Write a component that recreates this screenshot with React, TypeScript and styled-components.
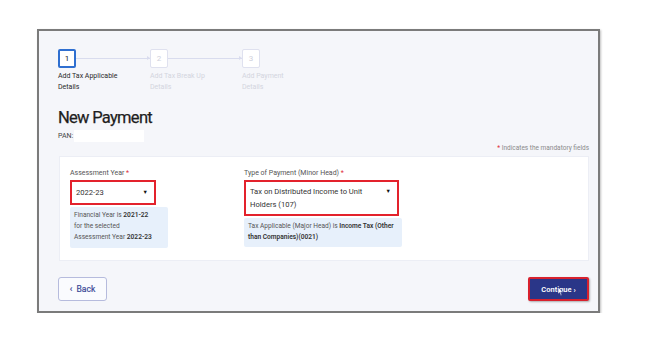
import React from "react";
import styled, { createGlobalStyle } from "styled-components";

const GlobalStyle = createGlobalStyle`
  html, body {
    margin: 0;
    padding: 0;
    background: #ffffff;
  }
  body {
    font-family: Roboto, "Liberation Sans", Arial, sans-serif;
  }
`;

const Page = styled.div`
  padding: 29px 0 0 37px;
`;

const Frame = styled.div`
  box-sizing: border-box;
  width: 563px;
  height: 284px;
  border: 2px solid #7b7b7b;
  background: #f5f6fa;
  padding: 18px 9px 0 19px;
  display: flex;
  flex-direction: column;
  box-shadow: 1px 1px 2px rgba(0, 0, 0, 0.25);
`;

const Stepper = styled.div`
  display: flex;
`;

const Step = styled.div`
  width: 92px;
  display: flex;
  flex-direction: column;
`;

const StepHead = styled.div`
  display: flex;
  align-items: center;
`;

const StepBox = styled.div<{ $active?: boolean }>`
  box-sizing: border-box;
  width: 18px;
  height: 19px;
  flex: none;
  border: ${(p) => (p.$active ? "2px solid #2f6fd0" : "1.5px solid #dfe1ef")};
  border-radius: 2px;
  background: #ffffff;
  display: flex;
  align-items: center;
  justify-content: center;
  font-size: 8px;
  color: ${(p) => (p.$active ? "#222" : "#cfd1dc")};
`;

const Connector = styled.div`
  flex: 1;
  height: 1px;
  background: #d9dcee;
  position: relative;
  &::after {
    content: "";
    position: absolute;
    right: 0;
    top: -2px;
    border-left: 3px solid #d9dcee;
    border-top: 2.5px solid transparent;
    border-bottom: 2.5px solid transparent;
  }
`;

const StepLabel = styled.div<{ $active?: boolean }>`
  margin-top: 3px;
  width: 62px;
  font-size: 7px;
  line-height: 11px;
  color: ${(p) => (p.$active ? "#2a2a2a" : "#d3d5de")};
`;

const Title = styled.h1`
  margin: 15px 0 0;
  font-size: 16.5px;
  line-height: 20px;
  font-weight: 400;
  letter-spacing: -0.7px;
  color: #1e1e1e;
  -webkit-text-stroke: 0.25px #1e1e1e;
`;

const PanRow = styled.div`
  display: flex;
  align-items: center;
  height: 12px;
  margin-top: 2px;
  font-size: 7px;
  color: #444;
`;

const PanValue = styled.div`
  width: 70px;
  height: 12px;
  background: #ffffff;
  margin-left: 1px;
`;

const Mandatory = styled.div`
  margin-top: 2px;
  text-align: right;
  font-size: 6.5px;
  line-height: 8px;
  color: #8a8a8a;
  span {
    color: #e0303a;
  }
`;

const Card = styled.div`
  box-sizing: border-box;
  margin: 4px 0 0 1px;
  height: 105px;
  background: #ffffff;
  border: 1px solid #eceef5;
  padding: 12px 10px 0 10px;
  display: flex;
`;

const Field = styled.div<{ $width: number }>`
  width: ${(p) => p.$width}px;
  display: flex;
  flex-direction: column;
`;

const Label = styled.div`
  font-size: 7px;
  line-height: 9px;
  color: #555;
  span {
    color: #e0303a;
  }
`;

const Select = styled.div<{ $width: number; $height: number; $padTop: number }>`
  box-sizing: border-box;
  margin-top: 2px;
  width: ${(p) => p.$width}px;
  height: ${(p) => p.$height}px;
  border: 2px solid #e3222c;
  background: #ffffff;
  display: flex;
  align-items: flex-start;
  justify-content: space-between;
  padding: ${(p) => p.$padTop}px 6px 0 4px;
  font-size: 7.6px;
  line-height: 13px;
  color: #333;
`;

const Caret = styled.span`
  font-size: 5.5px;
  line-height: 13px;
  color: #111;
  margin-left: 4px;
`;

const Info = styled.div<{ $width: number; $height: number }>`
  box-sizing: border-box;
  margin-top: 2px;
  width: ${(p) => p.$width}px;
  height: ${(p) => p.$height}px;
  background: #e7f0fb;
  border-radius: 2px;
  padding: 3px 4px 0 4px;
  font-size: 6.6px;
  line-height: 11px;
  color: #555;
  white-space: nowrap;
  b {
    font-weight: 600;
    color: #333;
  }
`;

const Footer = styled.div`
  margin-top: 16px;
  display: flex;
  justify-content: space-between;
  align-items: flex-start;
`;

const BackButton = styled.button`
  box-sizing: border-box;
  width: 49px;
  height: 24px;
  border: 1.5px solid #b6bbdd;
  border-radius: 3px;
  background: #fafbfe;
  color: #3d4b98;
  font-family: inherit;
  font-size: 8.5px;
  -webkit-text-stroke: 0.2px #3d4b98;
  padding: 0;
`;

const ContinueButton = styled.button`
  position: relative;
  box-sizing: border-box;
  width: 61px;
  height: 24px;
  border: 2px solid #d8212e;
  border-radius: 2px;
  background: #2a3688;
  color: #ffffff;
  font-family: inherit;
  font-size: 7.5px;
  font-weight: 600;
  padding: 0;
  box-shadow: 1px 1px 2px rgba(0, 0, 0, 0.3);
`;

const Cursor = styled.svg`
  position: absolute;
  left: 27px;
  top: 8px;
`;

const steps = [
  { n: 1, label: "Add Tax Applicable Details" },
  { n: 2, label: "Add Tax Break Up Details" },
  { n: 3, label: "Add Payment Details" },
];

export default function App() {
  return (
    <Page>
      <GlobalStyle />
      <Frame>
        <Stepper>
          {steps.map((s, i) => (
            <Step key={s.n}>
              <StepHead>
                <StepBox $active={i === 0}>{s.n}</StepBox>
                {i < steps.length - 1 && <Connector />}
              </StepHead>
              <StepLabel $active={i === 0}>{s.label}</StepLabel>
            </Step>
          ))}
        </Stepper>

        <Title>New Payment</Title>
        <PanRow>
          PAN:
          <PanValue />
        </PanRow>
        <Mandatory>
          <span>*</span> Indicates the mandatory fields
        </Mandatory>

        <Card>
          <Field $width={174}>
            <Label>
              Assessment Year <span>*</span>
            </Label>
            <Select $width={86} $height={25} $padTop={4}>
              <span>2022-23</span>
              <Caret>▼</Caret>
            </Select>
            <Info $width={98} $height={41}>
              Financial Year is <b>2021-22</b>
              <br />
              for the selected
              <br />
              Assessment Year <b>2022-23</b>
            </Info>
          </Field>
          <Field $width={160}>
            <Label>
              Type of Payment (Minor Head) <span>*</span>
            </Label>
            <Select $width={155} $height={36} $padTop={3}>
              <span>
                Tax on Distributed Income to Unit
                <br />
                Holders (107)
              </span>
              <Caret>▼</Caret>
            </Select>
            <Info $width={158} $height={29}>
              Tax Applicable (Major Head) is <b>Income Tax (Other</b>
              <br />
              <b>than Companies)(0021)</b>
            </Info>
          </Field>
        </Card>

        <Footer>
          <BackButton>‹&nbsp; Back</BackButton>
          <ContinueButton>
            Continue ›
            <Cursor width="6" height="9" viewBox="0 0 6 9">
              <path
                d="M1 0 L1 7 L2.6 5.6 L3.8 8.4 L4.8 8 L3.7 5.3 L5.8 5.2 Z"
                fill="#ffffff"
                stroke="#2a3688"
                strokeWidth="0.5"
              />
            </Cursor>
          </ContinueButton>
        </Footer>
      </Frame>
    </Page>
  );
}
